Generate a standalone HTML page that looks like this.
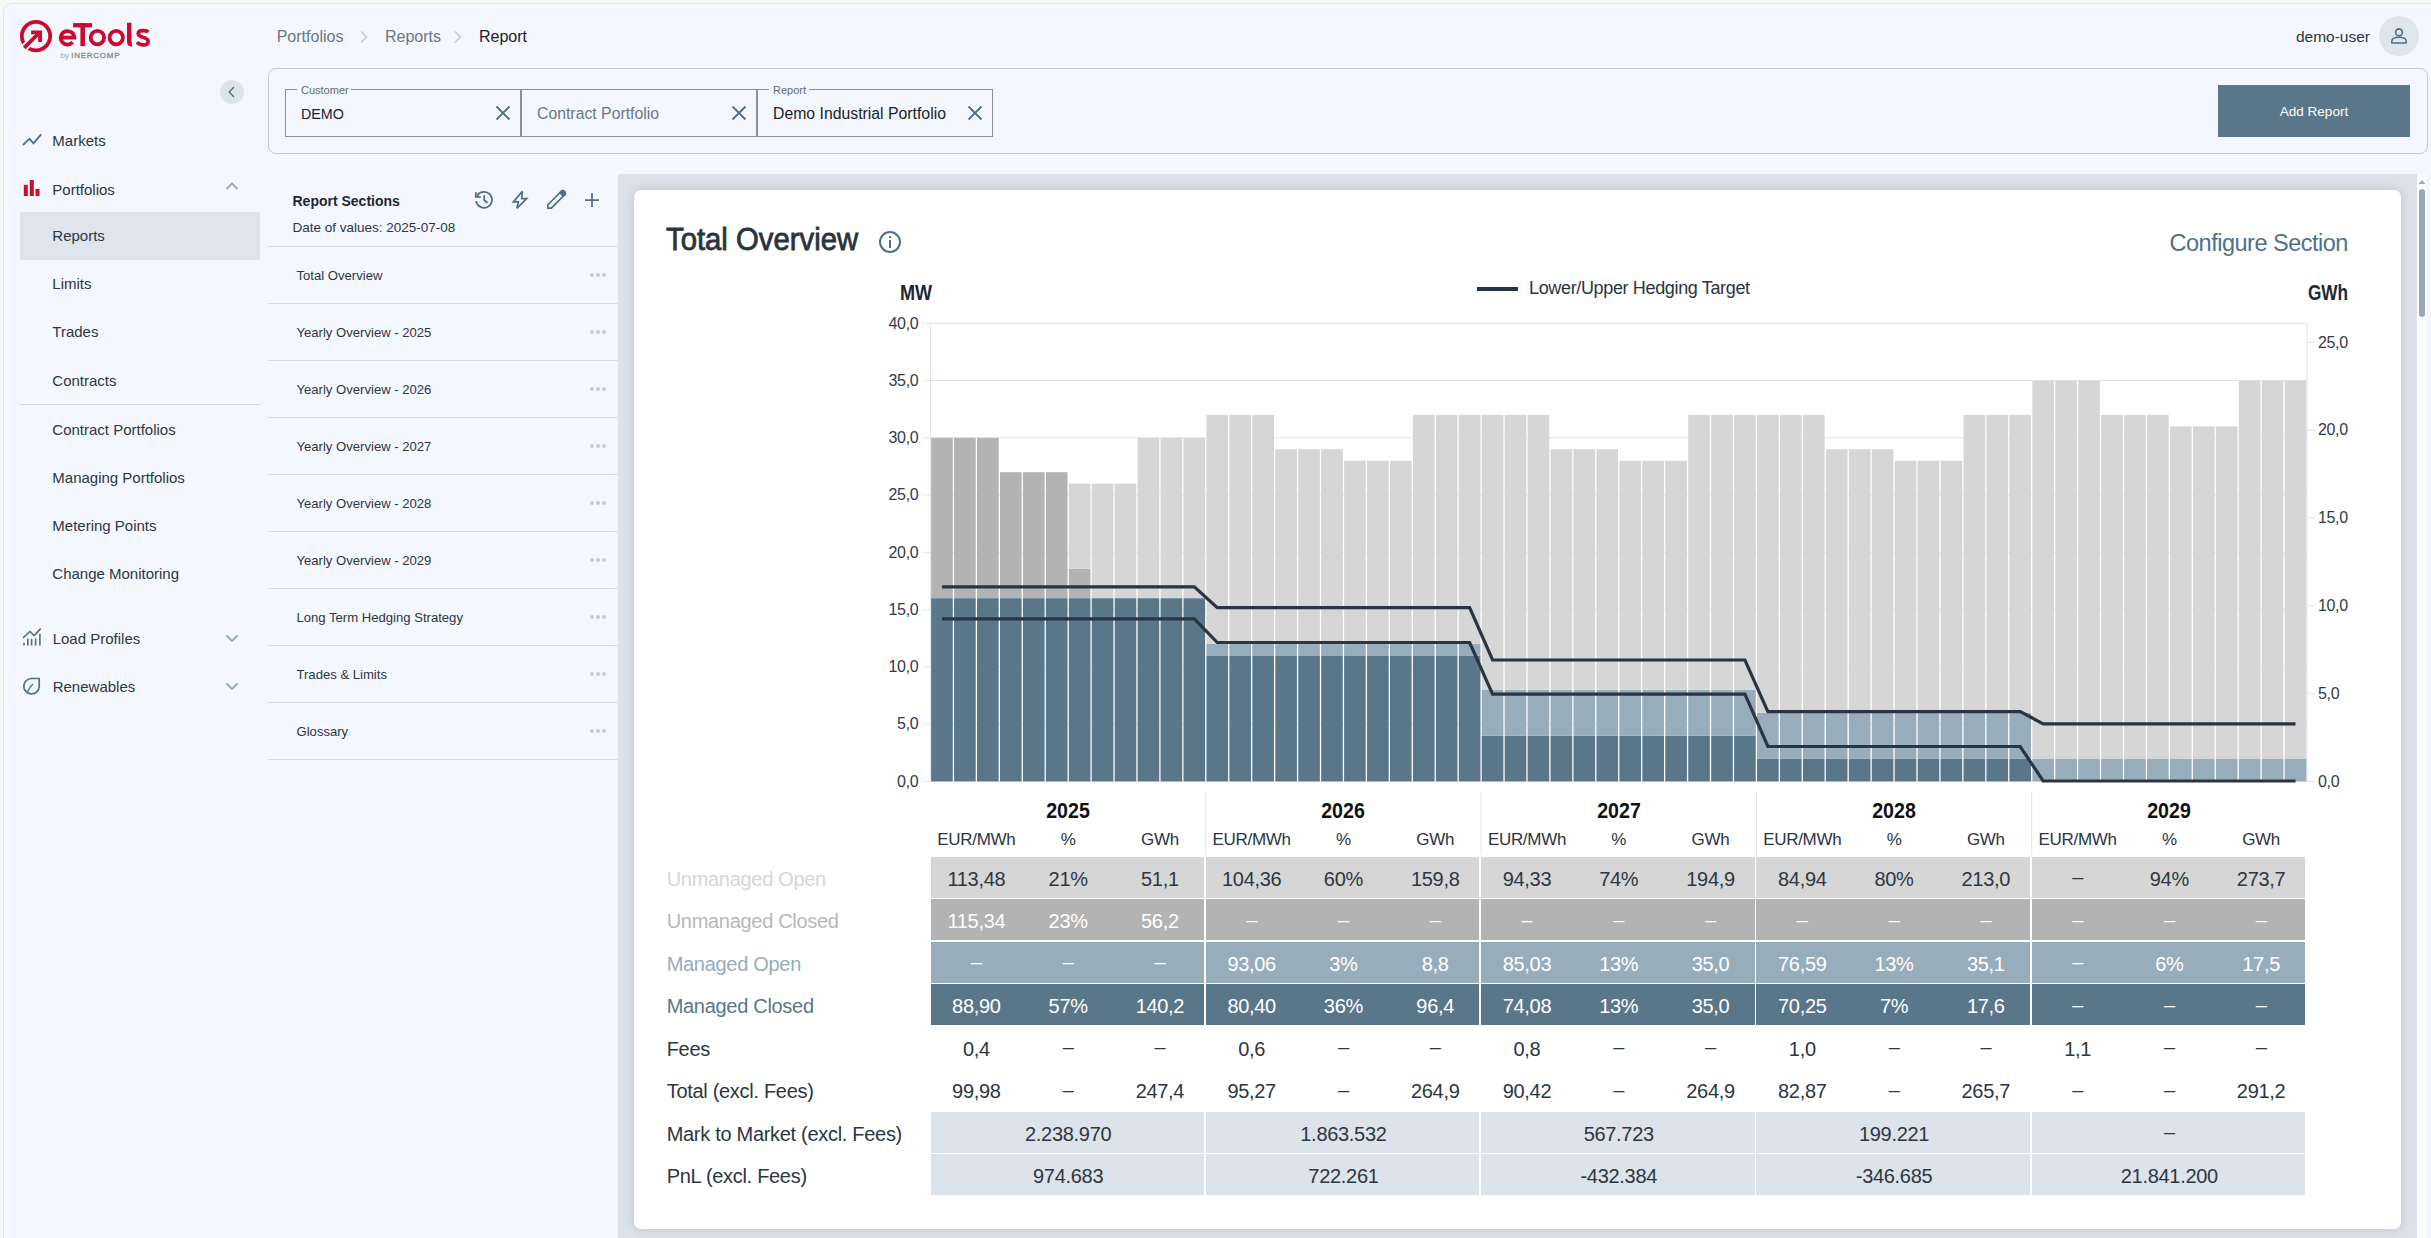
<!DOCTYPE html>
<html><head><meta charset="utf-8"><title>eTools Report</title>
<style>
html,body{margin:0;padding:0;width:2431px;height:1238px;overflow:hidden;background:#f7f7f7;font-family:"Liberation Sans", sans-serif;}
.t{position:absolute;white-space:nowrap;}
.r{position:absolute;}
</style></head><body>
<div class="r" style="left:3px;top:3px;width:2440px;height:1250px;background:#f4f7fd;border:1px solid #e3e3e3;border-radius:9px 9px 0 0;"></div><svg class="r" style="left:0px;top:0px;" width="160" height="64" viewBox="0 0 160 64"><circle cx="36" cy="36.1" r="14.2" fill="none" stroke="#cc0a2f" stroke-width="3.8"/><path d="M22.5 49.5 L38 34" stroke="#f4f7fd" stroke-width="7.5"/><path d="M24.2 47.8 L40 32" stroke="#cc0a2f" stroke-width="3.8"/><path d="M31.1 32.3 L40.1 32.3 L40.1 42" fill="none" stroke="#cc0a2f" stroke-width="3.8" stroke-linejoin="miter" stroke-linecap="butt"/><path d="M60.9 37.6 H74.3 A6.75 6.75 0 1 0 72.6 42.3" fill="none" stroke="#cc0a2f" stroke-width="3.8"/><rect x="73.1" y="23.1" width="18.9" height="4.3" fill="#cc0a2f"/><rect x="80.4" y="23.1" width="4.6" height="23.1" fill="#cc0a2f"/><circle cx="97.4" cy="37.6" r="6.7" fill="none" stroke="#cc0a2f" stroke-width="3.8"/><circle cx="116.25" cy="37.6" r="6.7" fill="none" stroke="#cc0a2f" stroke-width="3.8"/><path d="M129.2 22.7 V42 C129.2 44 130.3 44.5 132 44.3" fill="none" stroke="#cc0a2f" stroke-width="4.4"/><path d="M148.3 32.2 C146.8 30.2 144.5 30.6 142.5 30.6 C139.8 30.6 138.2 32 138.2 33.8 C138.2 38.2 148.2 36.2 148.2 41.4 C148.2 43.6 146.2 44.9 143.2 44.9 C140.5 44.9 138.5 44 137 42.2" fill="none" stroke="#cc0a2f" stroke-width="3.6"/></svg><div class="t" style="left:60.50px;top:51.63px;font-size:8px;line-height:8px;color:#8a8f96;font-weight:normal;letter-spacing:0px;"><span style="color:#a0a4aa">by</span> <span style="letter-spacing:0.75px;-webkit-text-stroke:0.35px #8a8f96">INERCOMP</span></div><div class="t" style="left:276.70px;top:28.56px;font-size:16px;line-height:16px;color:#6b7785;font-weight:normal;">Portfolios</div><svg class="r" style="left:358px;top:29px;" width="12" height="16" viewBox="0 0 12 16"><path d="M3 2.5 L8.5 8 L3 13.5" fill="none" stroke="#c6ccd3" stroke-width="1.6"/></svg><div class="t" style="left:385.00px;top:28.56px;font-size:16px;line-height:16px;color:#6b7785;font-weight:normal;">Reports</div><svg class="r" style="left:452px;top:29px;" width="12" height="16" viewBox="0 0 12 16"><path d="M3 2.5 L8.5 8 L3 13.5" fill="none" stroke="#c6ccd3" stroke-width="1.6"/></svg><div class="t" style="left:479.00px;top:28.56px;font-size:16px;line-height:16px;color:#1c222b;font-weight:normal;">Report</div><div class="t" style="left:2170.00px;width:200px;text-align:right;top:28.88px;font-size:15.5px;line-height:15.5px;color:#2d3642;font-weight:normal;">demo-user</div><div class="r" style="left:2379px;top:16px;width:40px;height:40px;border-radius:50%;background:#dfe5ed;"></div><svg class="r" style="left:2389px;top:26px;" width="20" height="20" viewBox="0 0 20 20"><circle cx="10" cy="6.3" r="3.4" fill="none" stroke="#516f86" stroke-width="1.6"/><path d="M2.8 17 L2.8 15.2 C2.8 12.6 5 11.2 10 11.2 C15 11.2 17.2 12.6 17.2 15.2 L17.2 17 Z" fill="none" stroke="#516f86" stroke-width="1.6" stroke-linejoin="round"/></svg><div class="r" style="left:220px;top:80px;width:24px;height:24px;border-radius:50%;background:#dde3ea;"></div><svg class="r" style="left:220px;top:80px;" width="24" height="24" viewBox="0 0 24 24"><path d="M14 7 L9.2 12 L14 17" fill="none" stroke="#516f86" stroke-width="1.35"/></svg><svg class="r" style="left:20px;top:130px;" width="24" height="20" viewBox="0 0 24 20"><path d="M2.9 15.1 L9.4 8.9 L13.5 13.4 L21.1 4.4" fill="none" stroke="#516f86" stroke-width="1.9"/></svg><div class="t" style="left:52.30px;top:133.30px;font-size:15px;line-height:15px;color:#2d3642;font-weight:normal;">Markets</div><svg class="r" style="left:20px;top:176px;" width="24" height="24" viewBox="0 0 24 24"><rect x="3.8" y="8.8" width="4" height="11.2" fill="#c8102e"/><rect x="9.8" y="4" width="4" height="16" fill="#c8102e"/><rect x="15.5" y="13" width="4" height="7" fill="#c8102e"/></svg><div class="t" style="left:52.30px;top:181.70px;font-size:15px;line-height:15px;color:#2d3642;font-weight:normal;">Portfolios</div><svg class="r" style="left:222px;top:176px;" width="20" height="20" viewBox="0 0 20 20"><path d="M4.5 13 L10 7.5 L15.5 13" fill="none" stroke="#97a9b6" stroke-width="1.8"/></svg><div class="r" style="left:20.00px;top:212.00px;width:240.00px;height:48.00px;background:#dfe5ee;"></div><div class="t" style="left:52.30px;top:228.10px;font-size:15px;line-height:15px;color:#2d3642;font-weight:normal;">Reports</div><div class="t" style="left:52.30px;top:276.20px;font-size:15px;line-height:15px;color:#2d3642;font-weight:normal;">Limits</div><div class="t" style="left:52.30px;top:324.30px;font-size:15px;line-height:15px;color:#2d3642;font-weight:normal;">Trades</div><div class="t" style="left:52.30px;top:372.50px;font-size:15px;line-height:15px;color:#2d3642;font-weight:normal;">Contracts</div><div class="r" style="left:20.00px;top:404.00px;width:240.00px;height:1.00px;background:#d5dbe2;"></div><div class="t" style="left:52.30px;top:421.60px;font-size:15px;line-height:15px;color:#2d3642;font-weight:normal;">Contract Portfolios</div><div class="t" style="left:52.30px;top:469.50px;font-size:15px;line-height:15px;color:#2d3642;font-weight:normal;">Managing Portfolios</div><div class="t" style="left:52.30px;top:517.60px;font-size:15px;line-height:15px;color:#2d3642;font-weight:normal;">Metering Points</div><div class="t" style="left:52.30px;top:565.80px;font-size:15px;line-height:15px;color:#2d3642;font-weight:normal;">Change Monitoring</div><svg class="r" style="left:20px;top:626px;" width="24" height="22" viewBox="0 0 24 22"><path d="M3 11.8 L10 5.5 L14.1 9.5 L20.7 2.6" fill="none" stroke="#516f86" stroke-width="1.6"/><path d="M4 19.6 V16.8 M7.8 19.6 V12.5 M11.6 19.6 V12.8 M15.6 19.6 V12.5 M19.9 19.6 V8" fill="none" stroke="#516f86" stroke-width="1.6"/></svg><div class="t" style="left:52.70px;top:630.60px;font-size:15px;line-height:15px;color:#2d3642;font-weight:normal;">Load Profiles</div><svg class="r" style="left:222px;top:628px;" width="20" height="20" viewBox="0 0 20 20"><path d="M4.5 7.5 L10 13 L15.5 7.5" fill="none" stroke="#97a9b6" stroke-width="1.8"/></svg><svg class="r" style="left:20px;top:675px;" width="24" height="24" viewBox="0 0 24 24"><path d="M19.2 3.5 L11.5 3.5 A7.7 7.7 0 1 0 19.2 11.2 Z" fill="none" stroke="#516f86" stroke-width="1.7" stroke-linejoin="miter"/><path d="M7.3 17.2 C8.5 14 10.5 11.2 12.9 9" fill="none" stroke="#516f86" stroke-width="1.4"/></svg><div class="t" style="left:52.70px;top:678.80px;font-size:15px;line-height:15px;color:#2d3642;font-weight:normal;">Renewables</div><svg class="r" style="left:222px;top:676px;" width="20" height="20" viewBox="0 0 20 20"><path d="M4.5 7.5 L10 13 L15.5 7.5" fill="none" stroke="#97a9b6" stroke-width="1.8"/></svg><div class="r" style="left:268px;top:68px;width:2159.5px;height:85.5px;border:1px solid #bccad5;border-radius:8px;box-sizing:border-box;"></div><div class="r" style="left:285px;top:89px;width:236px;height:48px;border:1px solid #8d9093;box-sizing:border-box;"></div><div class="r" style="left:297.00px;top:85.00px;width:54.00px;height:8.00px;background:#f4f7fd;"></div><div class="t" style="left:301.00px;top:85.49px;font-size:11px;line-height:11px;color:#5f6b78;font-weight:normal;">Customer</div><div class="t" style="left:301.00px;top:106.23px;font-size:15.8px;line-height:15.8px;color:#1c222b;font-weight:normal;letter-spacing:0px;"><span style="font-size:14.3px">DEMO</span></div><svg class="r" style="left:495px;top:105px;" width="16" height="16" viewBox="0 0 16 16"><path d="M1.5 1.5 L14.5 14.5 M14.5 1.5 L1.5 14.5" stroke="#4f6f85" stroke-width="1.8"/></svg><div class="r" style="left:521px;top:89px;width:236px;height:48px;border:1px solid #8d9093;box-sizing:border-box;"></div><div class="t" style="left:537.00px;top:106.23px;font-size:15.8px;line-height:15.8px;color:#6b7785;font-weight:normal;letter-spacing:0px;">Contract Portfolio</div><svg class="r" style="left:731px;top:105px;" width="16" height="16" viewBox="0 0 16 16"><path d="M1.5 1.5 L14.5 14.5 M14.5 1.5 L1.5 14.5" stroke="#4f6f85" stroke-width="1.8"/></svg><div class="r" style="left:757px;top:89px;width:236px;height:48px;border:1px solid #8d9093;box-sizing:border-box;"></div><div class="r" style="left:769.00px;top:85.00px;width:40.00px;height:8.00px;background:#f4f7fd;"></div><div class="t" style="left:773.00px;top:85.49px;font-size:11px;line-height:11px;color:#5f6b78;font-weight:normal;">Report</div><div class="t" style="left:773.00px;top:106.23px;font-size:15.8px;line-height:15.8px;color:#1c222b;font-weight:normal;letter-spacing:0px;">Demo Industrial Portfolio</div><svg class="r" style="left:967px;top:105px;" width="16" height="16" viewBox="0 0 16 16"><path d="M1.5 1.5 L14.5 14.5 M14.5 1.5 L1.5 14.5" stroke="#4f6f85" stroke-width="1.8"/></svg><div class="r" style="left:2218.00px;top:85.00px;width:192.00px;height:52.00px;background:#5a778a;"></div><div class="t" style="left:2218.00px;width:192px;text-align:center;top:104.87px;font-size:13.5px;line-height:13.5px;color:#ffffff;font-weight:normal;">Add Report</div><div class="t" style="left:292.50px;top:193.95px;font-size:14px;line-height:14px;color:#1f2733;font-weight:bold;">Report Sections</div><div class="t" style="left:292.50px;top:221.17px;font-size:13.5px;line-height:13.5px;color:#2d3642;font-weight:normal;">Date of values: 2025-07-08</div><svg class="r" style="left:474px;top:190px;" width="20" height="20" viewBox="0 0 20 20"><path d="M3.14 5.68 A8 8 0 1 1 2.1 11.05" fill="none" stroke="#516f86" stroke-width="1.75"/><path d="M1.8 2.2 L1.8 6.9 L6.8 6.9" fill="none" stroke="#516f86" stroke-width="1.75" stroke-linejoin="miter"/><path d="M10.2 5.3 L10.2 10 L13.5 13" fill="none" stroke="#516f86" stroke-width="1.75"/></svg><svg class="r" style="left:510px;top:189px;" width="20" height="23" viewBox="0 0 20 23"><path d="M12.3 2.4 L3.3 12.9 L8.3 12.9 L6.9 19.3 L16.7 9.7 L11.7 9.7 Z" fill="none" stroke="#516f86" stroke-width="1.7" stroke-linejoin="miter" stroke-miterlimit="3"/></svg><svg class="r" style="left:545px;top:189px;" width="22" height="22" viewBox="0 0 22 22"><path d="M2.85 15.75 L16.09 2.51 A2.4 2.4 0 0 1 19.49 5.91 L6.35 19.05 L2.85 19.05 Z" fill="none" stroke="#516f86" stroke-width="1.7" stroke-linejoin="miter"/><path d="M13.72 3.68 L15.49 1.91 A3.25 3.25 0 0 1 20.09 6.51 L18.32 8.28 Z" fill="#516f86"/></svg><svg class="r" style="left:582px;top:190px;" width="20" height="20" viewBox="0 0 20 20"><path d="M10 3 V17 M3 10 H17" stroke="#516f86" stroke-width="1.75"/></svg><div class="r" style="left:268.00px;top:246.00px;width:350.00px;height:1.00px;background:#d8dde3;"></div><div class="t" style="left:296.50px;top:268.51px;font-size:13.1px;line-height:13.1px;color:#2d3642;font-weight:normal;">Total Overview</div><div class="r" style="left:590px;top:273.0px;width:4px;height:4px;border-radius:50%;background:#c5ccd4;"></div><div class="r" style="left:596px;top:273.0px;width:4px;height:4px;border-radius:50%;background:#c5ccd4;"></div><div class="r" style="left:602px;top:273.0px;width:4px;height:4px;border-radius:50%;background:#c5ccd4;"></div><div class="r" style="left:268.00px;top:303.00px;width:350.00px;height:1.00px;background:#d8dde3;"></div><div class="t" style="left:296.50px;top:325.51px;font-size:13.1px;line-height:13.1px;color:#2d3642;font-weight:normal;">Yearly Overview - 2025</div><div class="r" style="left:590px;top:330.0px;width:4px;height:4px;border-radius:50%;background:#c5ccd4;"></div><div class="r" style="left:596px;top:330.0px;width:4px;height:4px;border-radius:50%;background:#c5ccd4;"></div><div class="r" style="left:602px;top:330.0px;width:4px;height:4px;border-radius:50%;background:#c5ccd4;"></div><div class="r" style="left:268.00px;top:360.00px;width:350.00px;height:1.00px;background:#d8dde3;"></div><div class="t" style="left:296.50px;top:382.51px;font-size:13.1px;line-height:13.1px;color:#2d3642;font-weight:normal;">Yearly Overview - 2026</div><div class="r" style="left:590px;top:387.0px;width:4px;height:4px;border-radius:50%;background:#c5ccd4;"></div><div class="r" style="left:596px;top:387.0px;width:4px;height:4px;border-radius:50%;background:#c5ccd4;"></div><div class="r" style="left:602px;top:387.0px;width:4px;height:4px;border-radius:50%;background:#c5ccd4;"></div><div class="r" style="left:268.00px;top:417.00px;width:350.00px;height:1.00px;background:#d8dde3;"></div><div class="t" style="left:296.50px;top:439.51px;font-size:13.1px;line-height:13.1px;color:#2d3642;font-weight:normal;">Yearly Overview - 2027</div><div class="r" style="left:590px;top:444.0px;width:4px;height:4px;border-radius:50%;background:#c5ccd4;"></div><div class="r" style="left:596px;top:444.0px;width:4px;height:4px;border-radius:50%;background:#c5ccd4;"></div><div class="r" style="left:602px;top:444.0px;width:4px;height:4px;border-radius:50%;background:#c5ccd4;"></div><div class="r" style="left:268.00px;top:474.00px;width:350.00px;height:1.00px;background:#d8dde3;"></div><div class="t" style="left:296.50px;top:496.51px;font-size:13.1px;line-height:13.1px;color:#2d3642;font-weight:normal;">Yearly Overview - 2028</div><div class="r" style="left:590px;top:501.0px;width:4px;height:4px;border-radius:50%;background:#c5ccd4;"></div><div class="r" style="left:596px;top:501.0px;width:4px;height:4px;border-radius:50%;background:#c5ccd4;"></div><div class="r" style="left:602px;top:501.0px;width:4px;height:4px;border-radius:50%;background:#c5ccd4;"></div><div class="r" style="left:268.00px;top:531.00px;width:350.00px;height:1.00px;background:#d8dde3;"></div><div class="t" style="left:296.50px;top:553.51px;font-size:13.1px;line-height:13.1px;color:#2d3642;font-weight:normal;">Yearly Overview - 2029</div><div class="r" style="left:590px;top:558.0px;width:4px;height:4px;border-radius:50%;background:#c5ccd4;"></div><div class="r" style="left:596px;top:558.0px;width:4px;height:4px;border-radius:50%;background:#c5ccd4;"></div><div class="r" style="left:602px;top:558.0px;width:4px;height:4px;border-radius:50%;background:#c5ccd4;"></div><div class="r" style="left:268.00px;top:588.00px;width:350.00px;height:1.00px;background:#d8dde3;"></div><div class="t" style="left:296.50px;top:610.51px;font-size:13.1px;line-height:13.1px;color:#2d3642;font-weight:normal;">Long Term Hedging Strategy</div><div class="r" style="left:590px;top:615.0px;width:4px;height:4px;border-radius:50%;background:#c5ccd4;"></div><div class="r" style="left:596px;top:615.0px;width:4px;height:4px;border-radius:50%;background:#c5ccd4;"></div><div class="r" style="left:602px;top:615.0px;width:4px;height:4px;border-radius:50%;background:#c5ccd4;"></div><div class="r" style="left:268.00px;top:645.00px;width:350.00px;height:1.00px;background:#d8dde3;"></div><div class="t" style="left:296.50px;top:667.51px;font-size:13.1px;line-height:13.1px;color:#2d3642;font-weight:normal;">Trades &amp; Limits</div><div class="r" style="left:590px;top:672.0px;width:4px;height:4px;border-radius:50%;background:#c5ccd4;"></div><div class="r" style="left:596px;top:672.0px;width:4px;height:4px;border-radius:50%;background:#c5ccd4;"></div><div class="r" style="left:602px;top:672.0px;width:4px;height:4px;border-radius:50%;background:#c5ccd4;"></div><div class="r" style="left:268.00px;top:702.00px;width:350.00px;height:1.00px;background:#d8dde3;"></div><div class="t" style="left:296.50px;top:724.51px;font-size:13.1px;line-height:13.1px;color:#2d3642;font-weight:normal;">Glossary</div><div class="r" style="left:590px;top:729.0px;width:4px;height:4px;border-radius:50%;background:#c5ccd4;"></div><div class="r" style="left:596px;top:729.0px;width:4px;height:4px;border-radius:50%;background:#c5ccd4;"></div><div class="r" style="left:602px;top:729.0px;width:4px;height:4px;border-radius:50%;background:#c5ccd4;"></div><div class="r" style="left:268.00px;top:759.00px;width:350.00px;height:1.00px;background:#d8dde3;"></div><div class="r" style="left:618.00px;top:174.00px;width:1799.00px;height:1064.00px;background:#dce2e9;"></div><div class="r" style="left:2417.00px;top:174.00px;width:10.00px;height:1064.00px;background:#fcfcfd;"></div><svg class="r" style="left:2417px;top:176px;" width="10" height="10" viewBox="0 0 10 10"><path d="M1.5 8 L5 4 L8.5 8 Z" fill="#97a9b6"/></svg><div class="r" style="left:2419px;top:189px;width:6px;height:128px;border-radius:3px;background:#97a9b6;"></div><div class="r" style="left:634px;top:189.5px;width:1767px;height:1039px;background:#fff;border-radius:7px;box-shadow:0 0 10px rgba(40,50,70,0.18);"></div><div class="t" style="left:666.00px;top:223.84px;font-size:31.5px;line-height:31.5px;color:#2a3340;font-weight:normal;transform:scaleX(0.93);transform-origin:0 50%;-webkit-text-stroke:0.8px #2a3340;">Total Overview</div><div class="r" style="left:879px;top:231px;width:18px;height:18px;border:2px solid #516f86;border-radius:50%;"></div><div class="r" style="left:889px;top:236px;width:2px;height:2.2px;background:#516f86;"></div><div class="r" style="left:889px;top:240px;width:2px;height:8px;background:#516f86;"></div><div class="t" style="left:1947.90px;width:400px;text-align:right;top:232.41px;font-size:23.5px;line-height:23.5px;color:#4f7188;font-weight:normal;letter-spacing:-0.5px;">Configure Section</div><div class="t" style="left:832.30px;width:100px;text-align:right;top:283.10px;font-size:21.5px;line-height:21.5px;color:#1f2733;font-weight:bold;transform:scaleX(0.84);transform-origin:100% 50%;">MW</div><div class="t" style="left:2247.50px;width:100px;text-align:right;top:283.30px;font-size:21.5px;line-height:21.5px;color:#1f2733;font-weight:bold;transform:scaleX(0.80);transform-origin:100% 50%;">GWh</div><div class="r" style="left:1476.50px;top:287.20px;width:41.50px;height:4.00px;background:#2b3442;"></div><div class="t" style="left:1529.00px;top:278.76px;font-size:18px;line-height:18px;color:#2b3442;font-weight:normal;letter-spacing:-0.35px;">Lower/Upper Hedging Target</div><svg class="r" style="left:0;top:0" width="2431" height="1238"><line x1="930.5" x2="2307.0" y1="781.40" y2="781.40" stroke="#dfe5ec" stroke-width="1"/><line x1="922.5" x2="930.5" y1="781.40" y2="781.40" stroke="#dfe5ec" stroke-width="1"/><line x1="930.5" x2="2307.0" y1="724.14" y2="724.14" stroke="#dfe5ec" stroke-width="1"/><line x1="922.5" x2="930.5" y1="724.14" y2="724.14" stroke="#dfe5ec" stroke-width="1"/><line x1="930.5" x2="2307.0" y1="666.88" y2="666.88" stroke="#dfe5ec" stroke-width="1"/><line x1="922.5" x2="930.5" y1="666.88" y2="666.88" stroke="#dfe5ec" stroke-width="1"/><line x1="930.5" x2="2307.0" y1="609.61" y2="609.61" stroke="#dfe5ec" stroke-width="1"/><line x1="922.5" x2="930.5" y1="609.61" y2="609.61" stroke="#dfe5ec" stroke-width="1"/><line x1="930.5" x2="2307.0" y1="552.35" y2="552.35" stroke="#dfe5ec" stroke-width="1"/><line x1="922.5" x2="930.5" y1="552.35" y2="552.35" stroke="#dfe5ec" stroke-width="1"/><line x1="930.5" x2="2307.0" y1="495.09" y2="495.09" stroke="#dfe5ec" stroke-width="1"/><line x1="922.5" x2="930.5" y1="495.09" y2="495.09" stroke="#dfe5ec" stroke-width="1"/><line x1="930.5" x2="2307.0" y1="437.82" y2="437.82" stroke="#dfe5ec" stroke-width="1"/><line x1="922.5" x2="930.5" y1="437.82" y2="437.82" stroke="#dfe5ec" stroke-width="1"/><line x1="930.5" x2="2307.0" y1="380.56" y2="380.56" stroke="#dfe5ec" stroke-width="1"/><line x1="922.5" x2="930.5" y1="380.56" y2="380.56" stroke="#dfe5ec" stroke-width="1"/><line x1="930.5" x2="2307.0" y1="323.30" y2="323.30" stroke="#dfe5ec" stroke-width="1"/><line x1="922.5" x2="930.5" y1="323.30" y2="323.30" stroke="#dfe5ec" stroke-width="1"/><line x1="2307.0" x2="2315.0" y1="781.40" y2="781.40" stroke="#dfe5ec" stroke-width="1"/><line x1="2307.0" x2="2315.0" y1="693.60" y2="693.60" stroke="#dfe5ec" stroke-width="1"/><line x1="2307.0" x2="2315.0" y1="605.80" y2="605.80" stroke="#dfe5ec" stroke-width="1"/><line x1="2307.0" x2="2315.0" y1="518.00" y2="518.00" stroke="#dfe5ec" stroke-width="1"/><line x1="2307.0" x2="2315.0" y1="430.20" y2="430.20" stroke="#dfe5ec" stroke-width="1"/><line x1="2307.0" x2="2315.0" y1="342.40" y2="342.40" stroke="#dfe5ec" stroke-width="1"/><line x1="930.5" x2="930.5" y1="323.30" y2="781.40" stroke="#dfe5ec" stroke-width="1"/><line x1="2307.0" x2="2307.0" y1="323.30" y2="781.40" stroke="#dfe5ec" stroke-width="1"/><rect x="931.15" y="598.16" width="21.64" height="183.24" fill="#5a778a"/><rect x="931.15" y="437.82" width="21.64" height="160.34" fill="#b3b3b3"/><rect x="954.09" y="598.16" width="21.64" height="183.24" fill="#5a778a"/><rect x="954.09" y="437.82" width="21.64" height="160.34" fill="#b3b3b3"/><rect x="977.03" y="598.16" width="21.64" height="183.24" fill="#5a778a"/><rect x="977.03" y="437.82" width="21.64" height="160.34" fill="#b3b3b3"/><rect x="999.98" y="598.16" width="21.64" height="183.24" fill="#5a778a"/><rect x="999.98" y="472.18" width="21.64" height="125.98" fill="#b3b3b3"/><rect x="1022.92" y="598.16" width="21.64" height="183.24" fill="#5a778a"/><rect x="1022.92" y="472.18" width="21.64" height="125.98" fill="#b3b3b3"/><rect x="1045.86" y="598.16" width="21.64" height="183.24" fill="#5a778a"/><rect x="1045.86" y="472.18" width="21.64" height="125.98" fill="#b3b3b3"/><rect x="1068.80" y="598.16" width="21.64" height="183.24" fill="#5a778a"/><rect x="1068.80" y="568.73" width="21.64" height="29.43" fill="#b3b3b3"/><rect x="1068.80" y="483.63" width="21.64" height="85.09" fill="#d6d6d6"/><rect x="1091.74" y="598.16" width="21.64" height="183.24" fill="#5a778a"/><rect x="1091.74" y="483.63" width="21.64" height="114.52" fill="#d6d6d6"/><rect x="1114.68" y="598.16" width="21.64" height="183.24" fill="#5a778a"/><rect x="1114.68" y="483.63" width="21.64" height="114.52" fill="#d6d6d6"/><rect x="1137.62" y="598.16" width="21.64" height="183.24" fill="#5a778a"/><rect x="1137.62" y="437.82" width="21.64" height="160.34" fill="#d6d6d6"/><rect x="1160.57" y="598.16" width="21.64" height="183.24" fill="#5a778a"/><rect x="1160.57" y="437.82" width="21.64" height="160.34" fill="#d6d6d6"/><rect x="1183.51" y="598.16" width="21.64" height="183.24" fill="#5a778a"/><rect x="1183.51" y="437.82" width="21.64" height="160.34" fill="#d6d6d6"/><rect x="1206.45" y="655.42" width="21.64" height="125.98" fill="#5a778a"/><rect x="1206.45" y="643.97" width="21.64" height="11.45" fill="#97adbb"/><rect x="1206.45" y="414.92" width="21.64" height="229.05" fill="#d6d6d6"/><rect x="1229.39" y="655.42" width="21.64" height="125.98" fill="#5a778a"/><rect x="1229.39" y="643.97" width="21.64" height="11.45" fill="#97adbb"/><rect x="1229.39" y="414.92" width="21.64" height="229.05" fill="#d6d6d6"/><rect x="1252.33" y="655.42" width="21.64" height="125.98" fill="#5a778a"/><rect x="1252.33" y="643.97" width="21.64" height="11.45" fill="#97adbb"/><rect x="1252.33" y="414.92" width="21.64" height="229.05" fill="#d6d6d6"/><rect x="1275.28" y="655.42" width="21.64" height="125.98" fill="#5a778a"/><rect x="1275.28" y="643.97" width="21.64" height="11.45" fill="#97adbb"/><rect x="1275.28" y="449.28" width="21.64" height="194.69" fill="#d6d6d6"/><rect x="1298.22" y="655.42" width="21.64" height="125.98" fill="#5a778a"/><rect x="1298.22" y="643.97" width="21.64" height="11.45" fill="#97adbb"/><rect x="1298.22" y="449.28" width="21.64" height="194.69" fill="#d6d6d6"/><rect x="1321.16" y="655.42" width="21.64" height="125.98" fill="#5a778a"/><rect x="1321.16" y="643.97" width="21.64" height="11.45" fill="#97adbb"/><rect x="1321.16" y="449.28" width="21.64" height="194.69" fill="#d6d6d6"/><rect x="1344.10" y="655.42" width="21.64" height="125.98" fill="#5a778a"/><rect x="1344.10" y="643.97" width="21.64" height="11.45" fill="#97adbb"/><rect x="1344.10" y="460.73" width="21.64" height="183.24" fill="#d6d6d6"/><rect x="1367.04" y="655.42" width="21.64" height="125.98" fill="#5a778a"/><rect x="1367.04" y="643.97" width="21.64" height="11.45" fill="#97adbb"/><rect x="1367.04" y="460.73" width="21.64" height="183.24" fill="#d6d6d6"/><rect x="1389.98" y="655.42" width="21.64" height="125.98" fill="#5a778a"/><rect x="1389.98" y="643.97" width="21.64" height="11.45" fill="#97adbb"/><rect x="1389.98" y="460.73" width="21.64" height="183.24" fill="#d6d6d6"/><rect x="1412.93" y="655.42" width="21.64" height="125.98" fill="#5a778a"/><rect x="1412.93" y="643.97" width="21.64" height="11.45" fill="#97adbb"/><rect x="1412.93" y="414.92" width="21.64" height="229.05" fill="#d6d6d6"/><rect x="1435.87" y="655.42" width="21.64" height="125.98" fill="#5a778a"/><rect x="1435.87" y="643.97" width="21.64" height="11.45" fill="#97adbb"/><rect x="1435.87" y="414.92" width="21.64" height="229.05" fill="#d6d6d6"/><rect x="1458.81" y="655.42" width="21.64" height="125.98" fill="#5a778a"/><rect x="1458.81" y="643.97" width="21.64" height="11.45" fill="#97adbb"/><rect x="1458.81" y="414.92" width="21.64" height="229.05" fill="#d6d6d6"/><rect x="1481.75" y="735.59" width="21.64" height="45.81" fill="#5a778a"/><rect x="1481.75" y="689.78" width="21.64" height="45.81" fill="#97adbb"/><rect x="1481.75" y="414.92" width="21.64" height="274.86" fill="#d6d6d6"/><rect x="1504.69" y="735.59" width="21.64" height="45.81" fill="#5a778a"/><rect x="1504.69" y="689.78" width="21.64" height="45.81" fill="#97adbb"/><rect x="1504.69" y="414.92" width="21.64" height="274.86" fill="#d6d6d6"/><rect x="1527.63" y="735.59" width="21.64" height="45.81" fill="#5a778a"/><rect x="1527.63" y="689.78" width="21.64" height="45.81" fill="#97adbb"/><rect x="1527.63" y="414.92" width="21.64" height="274.86" fill="#d6d6d6"/><rect x="1550.58" y="735.59" width="21.64" height="45.81" fill="#5a778a"/><rect x="1550.58" y="689.78" width="21.64" height="45.81" fill="#97adbb"/><rect x="1550.58" y="449.28" width="21.64" height="240.50" fill="#d6d6d6"/><rect x="1573.52" y="735.59" width="21.64" height="45.81" fill="#5a778a"/><rect x="1573.52" y="689.78" width="21.64" height="45.81" fill="#97adbb"/><rect x="1573.52" y="449.28" width="21.64" height="240.50" fill="#d6d6d6"/><rect x="1596.46" y="735.59" width="21.64" height="45.81" fill="#5a778a"/><rect x="1596.46" y="689.78" width="21.64" height="45.81" fill="#97adbb"/><rect x="1596.46" y="449.28" width="21.64" height="240.50" fill="#d6d6d6"/><rect x="1619.40" y="735.59" width="21.64" height="45.81" fill="#5a778a"/><rect x="1619.40" y="689.78" width="21.64" height="45.81" fill="#97adbb"/><rect x="1619.40" y="460.73" width="21.64" height="229.05" fill="#d6d6d6"/><rect x="1642.34" y="735.59" width="21.64" height="45.81" fill="#5a778a"/><rect x="1642.34" y="689.78" width="21.64" height="45.81" fill="#97adbb"/><rect x="1642.34" y="460.73" width="21.64" height="229.05" fill="#d6d6d6"/><rect x="1665.28" y="735.59" width="21.64" height="45.81" fill="#5a778a"/><rect x="1665.28" y="689.78" width="21.64" height="45.81" fill="#97adbb"/><rect x="1665.28" y="460.73" width="21.64" height="229.05" fill="#d6d6d6"/><rect x="1688.23" y="735.59" width="21.64" height="45.81" fill="#5a778a"/><rect x="1688.23" y="689.78" width="21.64" height="45.81" fill="#97adbb"/><rect x="1688.23" y="414.92" width="21.64" height="274.86" fill="#d6d6d6"/><rect x="1711.17" y="735.59" width="21.64" height="45.81" fill="#5a778a"/><rect x="1711.17" y="689.78" width="21.64" height="45.81" fill="#97adbb"/><rect x="1711.17" y="414.92" width="21.64" height="274.86" fill="#d6d6d6"/><rect x="1734.11" y="735.59" width="21.64" height="45.81" fill="#5a778a"/><rect x="1734.11" y="689.78" width="21.64" height="45.81" fill="#97adbb"/><rect x="1734.11" y="414.92" width="21.64" height="274.86" fill="#d6d6d6"/><rect x="1757.05" y="758.50" width="21.64" height="22.90" fill="#5a778a"/><rect x="1757.05" y="712.68" width="21.64" height="45.81" fill="#97adbb"/><rect x="1757.05" y="414.92" width="21.64" height="297.76" fill="#d6d6d6"/><rect x="1779.99" y="758.50" width="21.64" height="22.90" fill="#5a778a"/><rect x="1779.99" y="712.68" width="21.64" height="45.81" fill="#97adbb"/><rect x="1779.99" y="414.92" width="21.64" height="297.76" fill="#d6d6d6"/><rect x="1802.93" y="758.50" width="21.64" height="22.90" fill="#5a778a"/><rect x="1802.93" y="712.68" width="21.64" height="45.81" fill="#97adbb"/><rect x="1802.93" y="414.92" width="21.64" height="297.76" fill="#d6d6d6"/><rect x="1825.88" y="758.50" width="21.64" height="22.90" fill="#5a778a"/><rect x="1825.88" y="712.68" width="21.64" height="45.81" fill="#97adbb"/><rect x="1825.88" y="449.28" width="21.64" height="263.41" fill="#d6d6d6"/><rect x="1848.82" y="758.50" width="21.64" height="22.90" fill="#5a778a"/><rect x="1848.82" y="712.68" width="21.64" height="45.81" fill="#97adbb"/><rect x="1848.82" y="449.28" width="21.64" height="263.41" fill="#d6d6d6"/><rect x="1871.76" y="758.50" width="21.64" height="22.90" fill="#5a778a"/><rect x="1871.76" y="712.68" width="21.64" height="45.81" fill="#97adbb"/><rect x="1871.76" y="449.28" width="21.64" height="263.41" fill="#d6d6d6"/><rect x="1894.70" y="758.50" width="21.64" height="22.90" fill="#5a778a"/><rect x="1894.70" y="712.68" width="21.64" height="45.81" fill="#97adbb"/><rect x="1894.70" y="460.73" width="21.64" height="251.95" fill="#d6d6d6"/><rect x="1917.64" y="758.50" width="21.64" height="22.90" fill="#5a778a"/><rect x="1917.64" y="712.68" width="21.64" height="45.81" fill="#97adbb"/><rect x="1917.64" y="460.73" width="21.64" height="251.95" fill="#d6d6d6"/><rect x="1940.58" y="758.50" width="21.64" height="22.90" fill="#5a778a"/><rect x="1940.58" y="712.68" width="21.64" height="45.81" fill="#97adbb"/><rect x="1940.58" y="460.73" width="21.64" height="251.95" fill="#d6d6d6"/><rect x="1963.53" y="758.50" width="21.64" height="22.90" fill="#5a778a"/><rect x="1963.53" y="712.68" width="21.64" height="45.81" fill="#97adbb"/><rect x="1963.53" y="414.92" width="21.64" height="297.76" fill="#d6d6d6"/><rect x="1986.47" y="758.50" width="21.64" height="22.90" fill="#5a778a"/><rect x="1986.47" y="712.68" width="21.64" height="45.81" fill="#97adbb"/><rect x="1986.47" y="414.92" width="21.64" height="297.76" fill="#d6d6d6"/><rect x="2009.41" y="758.50" width="21.64" height="22.90" fill="#5a778a"/><rect x="2009.41" y="712.68" width="21.64" height="45.81" fill="#97adbb"/><rect x="2009.41" y="414.92" width="21.64" height="297.76" fill="#d6d6d6"/><rect x="2032.35" y="758.50" width="21.64" height="22.90" fill="#97adbb"/><rect x="2032.35" y="380.56" width="21.64" height="377.93" fill="#d6d6d6"/><rect x="2055.29" y="758.50" width="21.64" height="22.90" fill="#97adbb"/><rect x="2055.29" y="380.56" width="21.64" height="377.93" fill="#d6d6d6"/><rect x="2078.23" y="758.50" width="21.64" height="22.90" fill="#97adbb"/><rect x="2078.23" y="380.56" width="21.64" height="377.93" fill="#d6d6d6"/><rect x="2101.18" y="758.50" width="21.64" height="22.90" fill="#97adbb"/><rect x="2101.18" y="414.92" width="21.64" height="343.58" fill="#d6d6d6"/><rect x="2124.12" y="758.50" width="21.64" height="22.90" fill="#97adbb"/><rect x="2124.12" y="414.92" width="21.64" height="343.58" fill="#d6d6d6"/><rect x="2147.06" y="758.50" width="21.64" height="22.90" fill="#97adbb"/><rect x="2147.06" y="414.92" width="21.64" height="343.58" fill="#d6d6d6"/><rect x="2170.00" y="758.50" width="21.64" height="22.90" fill="#97adbb"/><rect x="2170.00" y="426.37" width="21.64" height="332.12" fill="#d6d6d6"/><rect x="2192.94" y="758.50" width="21.64" height="22.90" fill="#97adbb"/><rect x="2192.94" y="426.37" width="21.64" height="332.12" fill="#d6d6d6"/><rect x="2215.88" y="758.50" width="21.64" height="22.90" fill="#97adbb"/><rect x="2215.88" y="426.37" width="21.64" height="332.12" fill="#d6d6d6"/><rect x="2238.83" y="758.50" width="21.64" height="22.90" fill="#97adbb"/><rect x="2238.83" y="380.56" width="21.64" height="377.93" fill="#d6d6d6"/><rect x="2261.77" y="758.50" width="21.64" height="22.90" fill="#97adbb"/><rect x="2261.77" y="380.56" width="21.64" height="377.93" fill="#d6d6d6"/><rect x="2284.71" y="758.50" width="21.64" height="22.90" fill="#97adbb"/><rect x="2284.71" y="380.56" width="21.64" height="377.93" fill="#d6d6d6"/><path d="M941.97,586.80 L1194.33,586.80 L1217.27,607.70 L1469.63,607.70 L1492.57,660.00 L1744.93,660.00 L1767.87,711.60 L2020.23,711.60 L2043.17,723.80 L2295.53,723.80" fill="none" stroke="#2b3442" stroke-width="3.2" stroke-linejoin="miter"/><path d="M941.97,618.80 L1194.33,618.80 L1217.27,642.50 L1469.63,642.50 L1492.57,694.20 L1744.93,694.20 L1767.87,746.50 L2020.23,746.50 L2043.17,781.00 L2295.53,781.00" fill="none" stroke="#2b3442" stroke-width="3.2" stroke-linejoin="miter"/><line x1="1205.80" x2="1205.80" y1="792" y2="855" stroke="#e0e6ec" stroke-width="1"/><line x1="1481.10" x2="1481.10" y1="792" y2="855" stroke="#e0e6ec" stroke-width="1"/><line x1="1756.40" x2="1756.40" y1="792" y2="855" stroke="#e0e6ec" stroke-width="1"/><line x1="2031.70" x2="2031.70" y1="792" y2="855" stroke="#e0e6ec" stroke-width="1"/></svg><div class="t" style="left:858.30px;width:60px;text-align:right;top:773.66px;font-size:16px;line-height:16px;color:#333b46;font-weight:normal;letter-spacing:-0.35px;">0,0</div><div class="t" style="left:858.30px;width:60px;text-align:right;top:716.39px;font-size:16px;line-height:16px;color:#333b46;font-weight:normal;letter-spacing:-0.35px;">5,0</div><div class="t" style="left:858.30px;width:60px;text-align:right;top:659.13px;font-size:16px;line-height:16px;color:#333b46;font-weight:normal;letter-spacing:-0.35px;">10,0</div><div class="t" style="left:858.30px;width:60px;text-align:right;top:601.87px;font-size:16px;line-height:16px;color:#333b46;font-weight:normal;letter-spacing:-0.35px;">15,0</div><div class="t" style="left:858.30px;width:60px;text-align:right;top:544.61px;font-size:16px;line-height:16px;color:#333b46;font-weight:normal;letter-spacing:-0.35px;">20,0</div><div class="t" style="left:858.30px;width:60px;text-align:right;top:487.34px;font-size:16px;line-height:16px;color:#333b46;font-weight:normal;letter-spacing:-0.35px;">25,0</div><div class="t" style="left:858.30px;width:60px;text-align:right;top:430.08px;font-size:16px;line-height:16px;color:#333b46;font-weight:normal;letter-spacing:-0.35px;">30,0</div><div class="t" style="left:858.30px;width:60px;text-align:right;top:372.82px;font-size:16px;line-height:16px;color:#333b46;font-weight:normal;letter-spacing:-0.35px;">35,0</div><div class="t" style="left:858.30px;width:60px;text-align:right;top:315.56px;font-size:16px;line-height:16px;color:#333b46;font-weight:normal;letter-spacing:-0.35px;">40,0</div><div class="t" style="left:2318.00px;top:773.66px;font-size:16px;line-height:16px;color:#333b46;font-weight:normal;letter-spacing:-0.35px;">0,0</div><div class="t" style="left:2318.00px;top:685.86px;font-size:16px;line-height:16px;color:#333b46;font-weight:normal;letter-spacing:-0.35px;">5,0</div><div class="t" style="left:2318.00px;top:598.06px;font-size:16px;line-height:16px;color:#333b46;font-weight:normal;letter-spacing:-0.35px;">10,0</div><div class="t" style="left:2318.00px;top:510.26px;font-size:16px;line-height:16px;color:#333b46;font-weight:normal;letter-spacing:-0.35px;">15,0</div><div class="t" style="left:2318.00px;top:422.46px;font-size:16px;line-height:16px;color:#333b46;font-weight:normal;letter-spacing:-0.35px;">20,0</div><div class="t" style="left:2318.00px;top:334.66px;font-size:16px;line-height:16px;color:#333b46;font-weight:normal;letter-spacing:-0.35px;">25,0</div><div class="t" style="left:968.15px;width:200px;text-align:center;top:801.37px;font-size:21.3px;line-height:21.3px;color:#111;font-weight:bold;transform:scaleX(0.92);transform-origin:50% 50%;">2025</div><div class="t" style="left:916.38px;width:120px;text-align:center;top:830.51px;font-size:17px;line-height:17px;color:#2b3442;font-weight:normal;letter-spacing:-0.3px;">EUR/MWh</div><div class="t" style="left:1008.15px;width:120px;text-align:center;top:830.51px;font-size:17px;line-height:17px;color:#2b3442;font-weight:normal;letter-spacing:-0.3px;">%</div><div class="t" style="left:1099.92px;width:120px;text-align:center;top:830.51px;font-size:17px;line-height:17px;color:#2b3442;font-weight:normal;letter-spacing:-0.3px;">GWh</div><div class="t" style="left:1243.45px;width:200px;text-align:center;top:801.37px;font-size:21.3px;line-height:21.3px;color:#111;font-weight:bold;transform:scaleX(0.92);transform-origin:50% 50%;">2026</div><div class="t" style="left:1191.68px;width:120px;text-align:center;top:830.51px;font-size:17px;line-height:17px;color:#2b3442;font-weight:normal;letter-spacing:-0.3px;">EUR/MWh</div><div class="t" style="left:1283.45px;width:120px;text-align:center;top:830.51px;font-size:17px;line-height:17px;color:#2b3442;font-weight:normal;letter-spacing:-0.3px;">%</div><div class="t" style="left:1375.22px;width:120px;text-align:center;top:830.51px;font-size:17px;line-height:17px;color:#2b3442;font-weight:normal;letter-spacing:-0.3px;">GWh</div><div class="t" style="left:1518.75px;width:200px;text-align:center;top:801.37px;font-size:21.3px;line-height:21.3px;color:#111;font-weight:bold;transform:scaleX(0.92);transform-origin:50% 50%;">2027</div><div class="t" style="left:1466.98px;width:120px;text-align:center;top:830.51px;font-size:17px;line-height:17px;color:#2b3442;font-weight:normal;letter-spacing:-0.3px;">EUR/MWh</div><div class="t" style="left:1558.75px;width:120px;text-align:center;top:830.51px;font-size:17px;line-height:17px;color:#2b3442;font-weight:normal;letter-spacing:-0.3px;">%</div><div class="t" style="left:1650.52px;width:120px;text-align:center;top:830.51px;font-size:17px;line-height:17px;color:#2b3442;font-weight:normal;letter-spacing:-0.3px;">GWh</div><div class="t" style="left:1794.05px;width:200px;text-align:center;top:801.37px;font-size:21.3px;line-height:21.3px;color:#111;font-weight:bold;transform:scaleX(0.92);transform-origin:50% 50%;">2028</div><div class="t" style="left:1742.28px;width:120px;text-align:center;top:830.51px;font-size:17px;line-height:17px;color:#2b3442;font-weight:normal;letter-spacing:-0.3px;">EUR/MWh</div><div class="t" style="left:1834.05px;width:120px;text-align:center;top:830.51px;font-size:17px;line-height:17px;color:#2b3442;font-weight:normal;letter-spacing:-0.3px;">%</div><div class="t" style="left:1925.82px;width:120px;text-align:center;top:830.51px;font-size:17px;line-height:17px;color:#2b3442;font-weight:normal;letter-spacing:-0.3px;">GWh</div><div class="t" style="left:2069.35px;width:200px;text-align:center;top:801.37px;font-size:21.3px;line-height:21.3px;color:#111;font-weight:bold;transform:scaleX(0.92);transform-origin:50% 50%;">2029</div><div class="t" style="left:2017.58px;width:120px;text-align:center;top:830.51px;font-size:17px;line-height:17px;color:#2b3442;font-weight:normal;letter-spacing:-0.3px;">EUR/MWh</div><div class="t" style="left:2109.35px;width:120px;text-align:center;top:830.51px;font-size:17px;line-height:17px;color:#2b3442;font-weight:normal;letter-spacing:-0.3px;">%</div><div class="t" style="left:2201.12px;width:120px;text-align:center;top:830.51px;font-size:17px;line-height:17px;color:#2b3442;font-weight:normal;letter-spacing:-0.3px;">GWh</div><div class="t" style="left:666.70px;top:868.97px;font-size:20px;line-height:20px;color:#d6d6d6;font-weight:normal;letter-spacing:-0.3px;">Unmanaged Open</div><div class="r" style="left:930.50px;top:856.80px;width:273.70px;height:40.90px;background:#d6d6d6;"></div><div class="t" style="left:916.38px;width:120px;text-align:center;top:868.97px;font-size:20px;line-height:20px;color:#2d3642;font-weight:normal;letter-spacing:-0.3px;">113,48</div><div class="t" style="left:1008.15px;width:120px;text-align:center;top:868.97px;font-size:20px;line-height:20px;color:#2d3642;font-weight:normal;letter-spacing:-0.3px;">21%</div><div class="t" style="left:1099.92px;width:120px;text-align:center;top:868.97px;font-size:20px;line-height:20px;color:#2d3642;font-weight:normal;letter-spacing:-0.3px;">51,1</div><div class="r" style="left:1205.80px;top:856.80px;width:273.70px;height:40.90px;background:#d6d6d6;"></div><div class="t" style="left:1191.68px;width:120px;text-align:center;top:868.97px;font-size:20px;line-height:20px;color:#2d3642;font-weight:normal;letter-spacing:-0.3px;">104,36</div><div class="t" style="left:1283.45px;width:120px;text-align:center;top:868.97px;font-size:20px;line-height:20px;color:#2d3642;font-weight:normal;letter-spacing:-0.3px;">60%</div><div class="t" style="left:1375.22px;width:120px;text-align:center;top:868.97px;font-size:20px;line-height:20px;color:#2d3642;font-weight:normal;letter-spacing:-0.3px;">159,8</div><div class="r" style="left:1481.10px;top:856.80px;width:273.70px;height:40.90px;background:#d6d6d6;"></div><div class="t" style="left:1466.98px;width:120px;text-align:center;top:868.97px;font-size:20px;line-height:20px;color:#2d3642;font-weight:normal;letter-spacing:-0.3px;">94,33</div><div class="t" style="left:1558.75px;width:120px;text-align:center;top:868.97px;font-size:20px;line-height:20px;color:#2d3642;font-weight:normal;letter-spacing:-0.3px;">74%</div><div class="t" style="left:1650.52px;width:120px;text-align:center;top:868.97px;font-size:20px;line-height:20px;color:#2d3642;font-weight:normal;letter-spacing:-0.3px;">194,9</div><div class="r" style="left:1756.40px;top:856.80px;width:273.70px;height:40.90px;background:#d6d6d6;"></div><div class="t" style="left:1742.28px;width:120px;text-align:center;top:868.97px;font-size:20px;line-height:20px;color:#2d3642;font-weight:normal;letter-spacing:-0.3px;">84,94</div><div class="t" style="left:1834.05px;width:120px;text-align:center;top:868.97px;font-size:20px;line-height:20px;color:#2d3642;font-weight:normal;letter-spacing:-0.3px;">80%</div><div class="t" style="left:1925.82px;width:120px;text-align:center;top:868.97px;font-size:20px;line-height:20px;color:#2d3642;font-weight:normal;letter-spacing:-0.3px;">213,0</div><div class="r" style="left:2031.70px;top:856.80px;width:273.70px;height:40.90px;background:#d6d6d6;"></div><div class="t" style="left:2017.58px;width:120px;text-align:center;top:867.17px;font-size:20px;line-height:20px;color:#2d3642;font-weight:normal;letter-spacing:-0.3px;">–</div><div class="t" style="left:2109.35px;width:120px;text-align:center;top:868.97px;font-size:20px;line-height:20px;color:#2d3642;font-weight:normal;letter-spacing:-0.3px;">94%</div><div class="t" style="left:2201.12px;width:120px;text-align:center;top:868.97px;font-size:20px;line-height:20px;color:#2d3642;font-weight:normal;letter-spacing:-0.3px;">273,7</div><div class="t" style="left:666.70px;top:911.47px;font-size:20px;line-height:20px;color:#b8b8b8;font-weight:normal;letter-spacing:-0.3px;">Unmanaged Closed</div><div class="r" style="left:930.50px;top:899.30px;width:273.70px;height:40.90px;background:#b3b3b3;"></div><div class="t" style="left:916.38px;width:120px;text-align:center;top:911.47px;font-size:20px;line-height:20px;color:#fff;font-weight:normal;letter-spacing:-0.3px;">115,34</div><div class="t" style="left:1008.15px;width:120px;text-align:center;top:911.47px;font-size:20px;line-height:20px;color:#fff;font-weight:normal;letter-spacing:-0.3px;">23%</div><div class="t" style="left:1099.92px;width:120px;text-align:center;top:911.47px;font-size:20px;line-height:20px;color:#fff;font-weight:normal;letter-spacing:-0.3px;">56,2</div><div class="r" style="left:1205.80px;top:899.30px;width:273.70px;height:40.90px;background:#b3b3b3;"></div><div class="t" style="left:1191.68px;width:120px;text-align:center;top:909.67px;font-size:20px;line-height:20px;color:#fff;font-weight:normal;letter-spacing:-0.3px;">–</div><div class="t" style="left:1283.45px;width:120px;text-align:center;top:909.67px;font-size:20px;line-height:20px;color:#fff;font-weight:normal;letter-spacing:-0.3px;">–</div><div class="t" style="left:1375.22px;width:120px;text-align:center;top:909.67px;font-size:20px;line-height:20px;color:#fff;font-weight:normal;letter-spacing:-0.3px;">–</div><div class="r" style="left:1481.10px;top:899.30px;width:273.70px;height:40.90px;background:#b3b3b3;"></div><div class="t" style="left:1466.98px;width:120px;text-align:center;top:909.67px;font-size:20px;line-height:20px;color:#fff;font-weight:normal;letter-spacing:-0.3px;">–</div><div class="t" style="left:1558.75px;width:120px;text-align:center;top:909.67px;font-size:20px;line-height:20px;color:#fff;font-weight:normal;letter-spacing:-0.3px;">–</div><div class="t" style="left:1650.52px;width:120px;text-align:center;top:909.67px;font-size:20px;line-height:20px;color:#fff;font-weight:normal;letter-spacing:-0.3px;">–</div><div class="r" style="left:1756.40px;top:899.30px;width:273.70px;height:40.90px;background:#b3b3b3;"></div><div class="t" style="left:1742.28px;width:120px;text-align:center;top:909.67px;font-size:20px;line-height:20px;color:#fff;font-weight:normal;letter-spacing:-0.3px;">–</div><div class="t" style="left:1834.05px;width:120px;text-align:center;top:909.67px;font-size:20px;line-height:20px;color:#fff;font-weight:normal;letter-spacing:-0.3px;">–</div><div class="t" style="left:1925.82px;width:120px;text-align:center;top:909.67px;font-size:20px;line-height:20px;color:#fff;font-weight:normal;letter-spacing:-0.3px;">–</div><div class="r" style="left:2031.70px;top:899.30px;width:273.70px;height:40.90px;background:#b3b3b3;"></div><div class="t" style="left:2017.58px;width:120px;text-align:center;top:909.67px;font-size:20px;line-height:20px;color:#fff;font-weight:normal;letter-spacing:-0.3px;">–</div><div class="t" style="left:2109.35px;width:120px;text-align:center;top:909.67px;font-size:20px;line-height:20px;color:#fff;font-weight:normal;letter-spacing:-0.3px;">–</div><div class="t" style="left:2201.12px;width:120px;text-align:center;top:909.67px;font-size:20px;line-height:20px;color:#fff;font-weight:normal;letter-spacing:-0.3px;">–</div><div class="t" style="left:666.70px;top:953.97px;font-size:20px;line-height:20px;color:#97adbb;font-weight:normal;letter-spacing:-0.3px;">Managed Open</div><div class="r" style="left:930.50px;top:941.80px;width:273.70px;height:40.90px;background:#97adbb;"></div><div class="t" style="left:916.38px;width:120px;text-align:center;top:952.17px;font-size:20px;line-height:20px;color:#fff;font-weight:normal;letter-spacing:-0.3px;">–</div><div class="t" style="left:1008.15px;width:120px;text-align:center;top:952.17px;font-size:20px;line-height:20px;color:#fff;font-weight:normal;letter-spacing:-0.3px;">–</div><div class="t" style="left:1099.92px;width:120px;text-align:center;top:952.17px;font-size:20px;line-height:20px;color:#fff;font-weight:normal;letter-spacing:-0.3px;">–</div><div class="r" style="left:1205.80px;top:941.80px;width:273.70px;height:40.90px;background:#97adbb;"></div><div class="t" style="left:1191.68px;width:120px;text-align:center;top:953.97px;font-size:20px;line-height:20px;color:#fff;font-weight:normal;letter-spacing:-0.3px;">93,06</div><div class="t" style="left:1283.45px;width:120px;text-align:center;top:953.97px;font-size:20px;line-height:20px;color:#fff;font-weight:normal;letter-spacing:-0.3px;">3%</div><div class="t" style="left:1375.22px;width:120px;text-align:center;top:953.97px;font-size:20px;line-height:20px;color:#fff;font-weight:normal;letter-spacing:-0.3px;">8,8</div><div class="r" style="left:1481.10px;top:941.80px;width:273.70px;height:40.90px;background:#97adbb;"></div><div class="t" style="left:1466.98px;width:120px;text-align:center;top:953.97px;font-size:20px;line-height:20px;color:#fff;font-weight:normal;letter-spacing:-0.3px;">85,03</div><div class="t" style="left:1558.75px;width:120px;text-align:center;top:953.97px;font-size:20px;line-height:20px;color:#fff;font-weight:normal;letter-spacing:-0.3px;">13%</div><div class="t" style="left:1650.52px;width:120px;text-align:center;top:953.97px;font-size:20px;line-height:20px;color:#fff;font-weight:normal;letter-spacing:-0.3px;">35,0</div><div class="r" style="left:1756.40px;top:941.80px;width:273.70px;height:40.90px;background:#97adbb;"></div><div class="t" style="left:1742.28px;width:120px;text-align:center;top:953.97px;font-size:20px;line-height:20px;color:#fff;font-weight:normal;letter-spacing:-0.3px;">76,59</div><div class="t" style="left:1834.05px;width:120px;text-align:center;top:953.97px;font-size:20px;line-height:20px;color:#fff;font-weight:normal;letter-spacing:-0.3px;">13%</div><div class="t" style="left:1925.82px;width:120px;text-align:center;top:953.97px;font-size:20px;line-height:20px;color:#fff;font-weight:normal;letter-spacing:-0.3px;">35,1</div><div class="r" style="left:2031.70px;top:941.80px;width:273.70px;height:40.90px;background:#97adbb;"></div><div class="t" style="left:2017.58px;width:120px;text-align:center;top:952.17px;font-size:20px;line-height:20px;color:#fff;font-weight:normal;letter-spacing:-0.3px;">–</div><div class="t" style="left:2109.35px;width:120px;text-align:center;top:953.97px;font-size:20px;line-height:20px;color:#fff;font-weight:normal;letter-spacing:-0.3px;">6%</div><div class="t" style="left:2201.12px;width:120px;text-align:center;top:953.97px;font-size:20px;line-height:20px;color:#fff;font-weight:normal;letter-spacing:-0.3px;">17,5</div><div class="t" style="left:666.70px;top:996.47px;font-size:20px;line-height:20px;color:#5a778a;font-weight:normal;letter-spacing:-0.3px;">Managed Closed</div><div class="r" style="left:930.50px;top:984.30px;width:273.70px;height:40.90px;background:#5a778a;"></div><div class="t" style="left:916.38px;width:120px;text-align:center;top:996.47px;font-size:20px;line-height:20px;color:#fff;font-weight:normal;letter-spacing:-0.3px;">88,90</div><div class="t" style="left:1008.15px;width:120px;text-align:center;top:996.47px;font-size:20px;line-height:20px;color:#fff;font-weight:normal;letter-spacing:-0.3px;">57%</div><div class="t" style="left:1099.92px;width:120px;text-align:center;top:996.47px;font-size:20px;line-height:20px;color:#fff;font-weight:normal;letter-spacing:-0.3px;">140,2</div><div class="r" style="left:1205.80px;top:984.30px;width:273.70px;height:40.90px;background:#5a778a;"></div><div class="t" style="left:1191.68px;width:120px;text-align:center;top:996.47px;font-size:20px;line-height:20px;color:#fff;font-weight:normal;letter-spacing:-0.3px;">80,40</div><div class="t" style="left:1283.45px;width:120px;text-align:center;top:996.47px;font-size:20px;line-height:20px;color:#fff;font-weight:normal;letter-spacing:-0.3px;">36%</div><div class="t" style="left:1375.22px;width:120px;text-align:center;top:996.47px;font-size:20px;line-height:20px;color:#fff;font-weight:normal;letter-spacing:-0.3px;">96,4</div><div class="r" style="left:1481.10px;top:984.30px;width:273.70px;height:40.90px;background:#5a778a;"></div><div class="t" style="left:1466.98px;width:120px;text-align:center;top:996.47px;font-size:20px;line-height:20px;color:#fff;font-weight:normal;letter-spacing:-0.3px;">74,08</div><div class="t" style="left:1558.75px;width:120px;text-align:center;top:996.47px;font-size:20px;line-height:20px;color:#fff;font-weight:normal;letter-spacing:-0.3px;">13%</div><div class="t" style="left:1650.52px;width:120px;text-align:center;top:996.47px;font-size:20px;line-height:20px;color:#fff;font-weight:normal;letter-spacing:-0.3px;">35,0</div><div class="r" style="left:1756.40px;top:984.30px;width:273.70px;height:40.90px;background:#5a778a;"></div><div class="t" style="left:1742.28px;width:120px;text-align:center;top:996.47px;font-size:20px;line-height:20px;color:#fff;font-weight:normal;letter-spacing:-0.3px;">70,25</div><div class="t" style="left:1834.05px;width:120px;text-align:center;top:996.47px;font-size:20px;line-height:20px;color:#fff;font-weight:normal;letter-spacing:-0.3px;">7%</div><div class="t" style="left:1925.82px;width:120px;text-align:center;top:996.47px;font-size:20px;line-height:20px;color:#fff;font-weight:normal;letter-spacing:-0.3px;">17,6</div><div class="r" style="left:2031.70px;top:984.30px;width:273.70px;height:40.90px;background:#5a778a;"></div><div class="t" style="left:2017.58px;width:120px;text-align:center;top:994.67px;font-size:20px;line-height:20px;color:#fff;font-weight:normal;letter-spacing:-0.3px;">–</div><div class="t" style="left:2109.35px;width:120px;text-align:center;top:994.67px;font-size:20px;line-height:20px;color:#fff;font-weight:normal;letter-spacing:-0.3px;">–</div><div class="t" style="left:2201.12px;width:120px;text-align:center;top:994.67px;font-size:20px;line-height:20px;color:#fff;font-weight:normal;letter-spacing:-0.3px;">–</div><div class="t" style="left:666.70px;top:1038.97px;font-size:20px;line-height:20px;color:#2d3642;font-weight:normal;letter-spacing:-0.3px;">Fees</div><div class="t" style="left:916.38px;width:120px;text-align:center;top:1038.97px;font-size:20px;line-height:20px;color:#2d3642;font-weight:normal;letter-spacing:-0.3px;">0,4</div><div class="t" style="left:1008.15px;width:120px;text-align:center;top:1037.17px;font-size:20px;line-height:20px;color:#2d3642;font-weight:normal;letter-spacing:-0.3px;">–</div><div class="t" style="left:1099.92px;width:120px;text-align:center;top:1037.17px;font-size:20px;line-height:20px;color:#2d3642;font-weight:normal;letter-spacing:-0.3px;">–</div><div class="t" style="left:1191.68px;width:120px;text-align:center;top:1038.97px;font-size:20px;line-height:20px;color:#2d3642;font-weight:normal;letter-spacing:-0.3px;">0,6</div><div class="t" style="left:1283.45px;width:120px;text-align:center;top:1037.17px;font-size:20px;line-height:20px;color:#2d3642;font-weight:normal;letter-spacing:-0.3px;">–</div><div class="t" style="left:1375.22px;width:120px;text-align:center;top:1037.17px;font-size:20px;line-height:20px;color:#2d3642;font-weight:normal;letter-spacing:-0.3px;">–</div><div class="t" style="left:1466.98px;width:120px;text-align:center;top:1038.97px;font-size:20px;line-height:20px;color:#2d3642;font-weight:normal;letter-spacing:-0.3px;">0,8</div><div class="t" style="left:1558.75px;width:120px;text-align:center;top:1037.17px;font-size:20px;line-height:20px;color:#2d3642;font-weight:normal;letter-spacing:-0.3px;">–</div><div class="t" style="left:1650.52px;width:120px;text-align:center;top:1037.17px;font-size:20px;line-height:20px;color:#2d3642;font-weight:normal;letter-spacing:-0.3px;">–</div><div class="t" style="left:1742.28px;width:120px;text-align:center;top:1038.97px;font-size:20px;line-height:20px;color:#2d3642;font-weight:normal;letter-spacing:-0.3px;">1,0</div><div class="t" style="left:1834.05px;width:120px;text-align:center;top:1037.17px;font-size:20px;line-height:20px;color:#2d3642;font-weight:normal;letter-spacing:-0.3px;">–</div><div class="t" style="left:1925.82px;width:120px;text-align:center;top:1037.17px;font-size:20px;line-height:20px;color:#2d3642;font-weight:normal;letter-spacing:-0.3px;">–</div><div class="t" style="left:2017.58px;width:120px;text-align:center;top:1038.97px;font-size:20px;line-height:20px;color:#2d3642;font-weight:normal;letter-spacing:-0.3px;">1,1</div><div class="t" style="left:2109.35px;width:120px;text-align:center;top:1037.17px;font-size:20px;line-height:20px;color:#2d3642;font-weight:normal;letter-spacing:-0.3px;">–</div><div class="t" style="left:2201.12px;width:120px;text-align:center;top:1037.17px;font-size:20px;line-height:20px;color:#2d3642;font-weight:normal;letter-spacing:-0.3px;">–</div><div class="t" style="left:666.70px;top:1081.47px;font-size:20px;line-height:20px;color:#2d3642;font-weight:normal;letter-spacing:-0.3px;">Total (excl. Fees)</div><div class="t" style="left:916.38px;width:120px;text-align:center;top:1081.47px;font-size:20px;line-height:20px;color:#2d3642;font-weight:normal;letter-spacing:-0.3px;">99,98</div><div class="t" style="left:1008.15px;width:120px;text-align:center;top:1079.67px;font-size:20px;line-height:20px;color:#2d3642;font-weight:normal;letter-spacing:-0.3px;">–</div><div class="t" style="left:1099.92px;width:120px;text-align:center;top:1081.47px;font-size:20px;line-height:20px;color:#2d3642;font-weight:normal;letter-spacing:-0.3px;">247,4</div><div class="t" style="left:1191.68px;width:120px;text-align:center;top:1081.47px;font-size:20px;line-height:20px;color:#2d3642;font-weight:normal;letter-spacing:-0.3px;">95,27</div><div class="t" style="left:1283.45px;width:120px;text-align:center;top:1079.67px;font-size:20px;line-height:20px;color:#2d3642;font-weight:normal;letter-spacing:-0.3px;">–</div><div class="t" style="left:1375.22px;width:120px;text-align:center;top:1081.47px;font-size:20px;line-height:20px;color:#2d3642;font-weight:normal;letter-spacing:-0.3px;">264,9</div><div class="t" style="left:1466.98px;width:120px;text-align:center;top:1081.47px;font-size:20px;line-height:20px;color:#2d3642;font-weight:normal;letter-spacing:-0.3px;">90,42</div><div class="t" style="left:1558.75px;width:120px;text-align:center;top:1079.67px;font-size:20px;line-height:20px;color:#2d3642;font-weight:normal;letter-spacing:-0.3px;">–</div><div class="t" style="left:1650.52px;width:120px;text-align:center;top:1081.47px;font-size:20px;line-height:20px;color:#2d3642;font-weight:normal;letter-spacing:-0.3px;">264,9</div><div class="t" style="left:1742.28px;width:120px;text-align:center;top:1081.47px;font-size:20px;line-height:20px;color:#2d3642;font-weight:normal;letter-spacing:-0.3px;">82,87</div><div class="t" style="left:1834.05px;width:120px;text-align:center;top:1079.67px;font-size:20px;line-height:20px;color:#2d3642;font-weight:normal;letter-spacing:-0.3px;">–</div><div class="t" style="left:1925.82px;width:120px;text-align:center;top:1081.47px;font-size:20px;line-height:20px;color:#2d3642;font-weight:normal;letter-spacing:-0.3px;">265,7</div><div class="t" style="left:2017.58px;width:120px;text-align:center;top:1079.67px;font-size:20px;line-height:20px;color:#2d3642;font-weight:normal;letter-spacing:-0.3px;">–</div><div class="t" style="left:2109.35px;width:120px;text-align:center;top:1079.67px;font-size:20px;line-height:20px;color:#2d3642;font-weight:normal;letter-spacing:-0.3px;">–</div><div class="t" style="left:2201.12px;width:120px;text-align:center;top:1081.47px;font-size:20px;line-height:20px;color:#2d3642;font-weight:normal;letter-spacing:-0.3px;">291,2</div><div class="t" style="left:666.70px;top:1123.97px;font-size:20px;line-height:20px;color:#2d3642;font-weight:normal;letter-spacing:-0.3px;">Mark to Market (excl. Fees)</div><div class="r" style="left:930.50px;top:1111.80px;width:273.70px;height:40.90px;background:#dde3ea;"></div><div class="t" style="left:938.15px;width:260px;text-align:center;top:1123.97px;font-size:20px;line-height:20px;color:#2d3642;font-weight:normal;letter-spacing:-0.3px;">2.238.970</div><div class="r" style="left:1205.80px;top:1111.80px;width:273.70px;height:40.90px;background:#dde3ea;"></div><div class="t" style="left:1213.45px;width:260px;text-align:center;top:1123.97px;font-size:20px;line-height:20px;color:#2d3642;font-weight:normal;letter-spacing:-0.3px;">1.863.532</div><div class="r" style="left:1481.10px;top:1111.80px;width:273.70px;height:40.90px;background:#dde3ea;"></div><div class="t" style="left:1488.75px;width:260px;text-align:center;top:1123.97px;font-size:20px;line-height:20px;color:#2d3642;font-weight:normal;letter-spacing:-0.3px;">567.723</div><div class="r" style="left:1756.40px;top:1111.80px;width:273.70px;height:40.90px;background:#dde3ea;"></div><div class="t" style="left:1764.05px;width:260px;text-align:center;top:1123.97px;font-size:20px;line-height:20px;color:#2d3642;font-weight:normal;letter-spacing:-0.3px;">199.221</div><div class="r" style="left:2031.70px;top:1111.80px;width:273.70px;height:40.90px;background:#dde3ea;"></div><div class="t" style="left:2039.35px;width:260px;text-align:center;top:1122.17px;font-size:20px;line-height:20px;color:#2d3642;font-weight:normal;letter-spacing:-0.3px;">–</div><div class="t" style="left:666.70px;top:1166.47px;font-size:20px;line-height:20px;color:#2d3642;font-weight:normal;letter-spacing:-0.3px;">PnL (excl. Fees)</div><div class="r" style="left:930.50px;top:1154.30px;width:273.70px;height:40.90px;background:#dde3ea;"></div><div class="t" style="left:938.15px;width:260px;text-align:center;top:1166.47px;font-size:20px;line-height:20px;color:#2d3642;font-weight:normal;letter-spacing:-0.3px;">974.683</div><div class="r" style="left:1205.80px;top:1154.30px;width:273.70px;height:40.90px;background:#dde3ea;"></div><div class="t" style="left:1213.45px;width:260px;text-align:center;top:1166.47px;font-size:20px;line-height:20px;color:#2d3642;font-weight:normal;letter-spacing:-0.3px;">722.261</div><div class="r" style="left:1481.10px;top:1154.30px;width:273.70px;height:40.90px;background:#dde3ea;"></div><div class="t" style="left:1488.75px;width:260px;text-align:center;top:1166.47px;font-size:20px;line-height:20px;color:#2d3642;font-weight:normal;letter-spacing:-0.3px;">-432.384</div><div class="r" style="left:1756.40px;top:1154.30px;width:273.70px;height:40.90px;background:#dde3ea;"></div><div class="t" style="left:1764.05px;width:260px;text-align:center;top:1166.47px;font-size:20px;line-height:20px;color:#2d3642;font-weight:normal;letter-spacing:-0.3px;">-346.685</div><div class="r" style="left:2031.70px;top:1154.30px;width:273.70px;height:40.90px;background:#dde3ea;"></div><div class="t" style="left:2039.35px;width:260px;text-align:center;top:1166.47px;font-size:20px;line-height:20px;color:#2d3642;font-weight:normal;letter-spacing:-0.3px;">21.841.200</div>
</body></html>
